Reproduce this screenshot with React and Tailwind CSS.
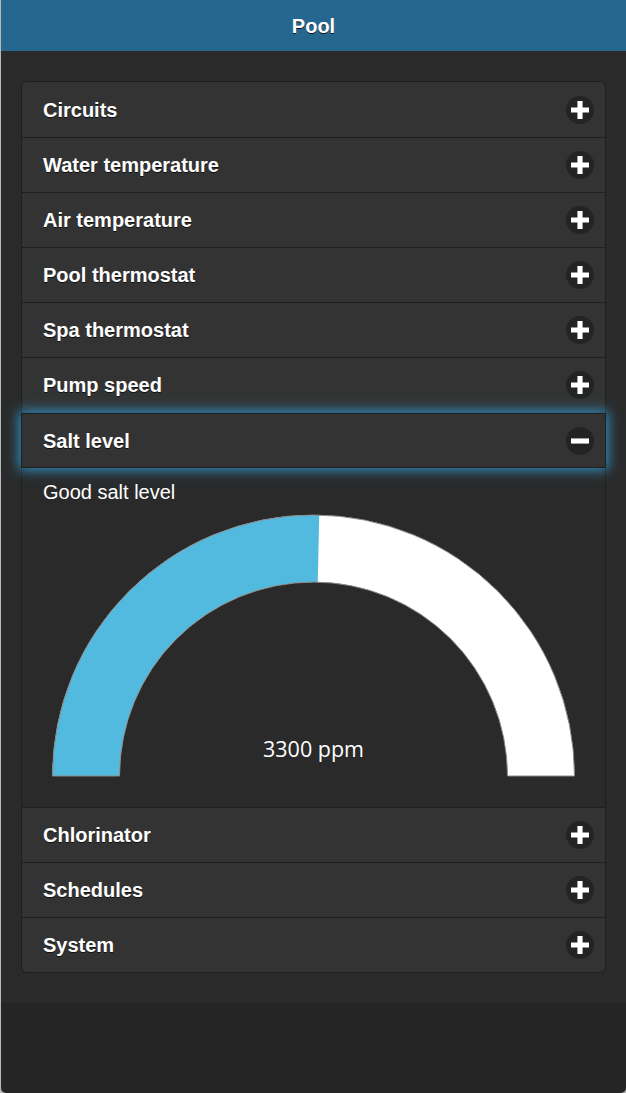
import React from 'react';

const before = ['Circuits', 'Water temperature', 'Air temperature', 'Pool thermostat', 'Spa thermostat', 'Pump speed'];
const after = ['Chlorinator', 'Schedules', 'System'];

const ToggleIcon = ({ open }) => (
    <span className="flex h-7 w-7 items-center justify-center rounded-full bg-black/30">
        <svg width="18" height="18" viewBox="0 0 14 14" fill="#fff">
            {open ? (
                <polygon points="14,5 0,5 0,9 14,9" />
            ) : (
                <polygon points="14,5 9,5 9,0 5,0 5,5 0,5 0,9 5,9 5,14 9,14 9,9 14,9" />
            )}
        </svg>
    </span>
);

const Row = ({ label, open, first }) => (
    <div
        className={`flex h-[55px] items-center justify-between bg-[#333] pl-[21px] pr-[11px] ${first ? '' : 'border-t border-[#1f1f1f]'} ${open ? 'relative z-10 border-b border-x border-[#1f1f1f] -mx-px mt-px shadow-[0_0_12px_2px_#2f93c8]' : ''}`}
    >
        <span className="text-[20px] font-bold text-white [text-shadow:0_1px_0_#111]">{label}</span>
        <ToggleIcon open={open} />
    </div>
);

// half-circle gauge, value drawn over a white track
const Gauge = ({ fraction, label }) => {
    const cx = 270.5;
    const cy = 270;
    const R = 261;
    const r = 194;
    const phi = Math.PI * (1 - fraction);
    const ox = cx + R * Math.cos(phi);
    const oy = cy - R * Math.sin(phi);
    const ix = cx + r * Math.cos(phi);
    const iy = cy - r * Math.sin(phi);
    const track = `M ${cx - R} ${cy} A ${R} ${R} 0 0 1 ${cx + R} ${cy} L ${cx + r} ${cy} A ${r} ${r} 0 0 0 ${cx - r} ${cy} Z`;
    const value = `M ${cx - R} ${cy} A ${R} ${R} 0 0 1 ${ox} ${oy} L ${ix} ${iy} A ${r} ${r} 0 0 0 ${cx - r} ${cy} Z`;
    return (
        <svg width="541" height="290" viewBox="0 0 541 290" className="block">
            <path d={track} fill="#fff" />
            <path d={value} fill="#53badf" />
            <path d={track} fill="none" stroke="#8a8a8a" strokeWidth="1" />
            <text
                x={cx}
                y="251"
                textAnchor="middle"
                fill="#fff"
                fontSize="21.5"
                fontFamily="'Open Sans', 'DejaVu Sans', sans-serif"
            >
                {label}
            </text>
        </svg>
    );
};

export default function App() {
    return (
        <div className="min-h-[1093px] bg-[#b8b8b8] pl-px" style={{ fontFamily: "'Liberation Sans', Arial, sans-serif" }}>
            <div className="flex min-h-[1093px] flex-col overflow-hidden rounded-b-[5px] bg-[#252525]">
                {/* Header */}
                <div className="flex h-[51px] items-center justify-center bg-[#26678f]">
                    <h1 className="text-[20px] font-bold text-white [text-shadow:0_1px_0_#111]">Pool</h1>
                </div>

                {/* Content */}
                <div className="bg-[#2a2a2a] px-5 pt-[30px] pb-[30px]">
                    <div className="rounded-[5px] border border-[#1f1f1f]">
                        <div className="overflow-hidden rounded-t-[5px]">
                            {before.map((s, i) => (
                                <Row key={s} label={s} first={i === 0} />
                            ))}
                        </div>
                        <Row label="Salt level" open />
                        <div className="bg-[#2a2a2a] px-[21px] pt-[12px] pb-[11px]">
                            <p className="text-[20px] leading-[25px] text-white">Good salt level</p>
                            <div className="mt-px">
                                <Gauge fraction={0.507} label="3300 ppm" />
                            </div>
                        </div>
                        <div className="overflow-hidden rounded-b-[5px]">
                            {after.map((s) => (
                                <Row key={s} label={s} />
                            ))}
                        </div>
                    </div>
                </div>
            </div>
        </div>
    );
}
